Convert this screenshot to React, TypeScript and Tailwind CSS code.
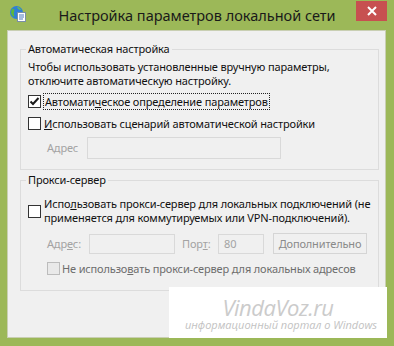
import React from "react";

function Box({ checked, disabled }: { checked?: boolean; disabled?: boolean }) {
  return (
    <span
      className={
        disabled
          ? "w-[13px] h-[13px] border border-[#bcbcbc] bg-[#e9e9e9] flex items-center justify-center shrink-0"
          : "w-[13px] h-[13px] border border-[#333333] bg-white flex items-center justify-center shrink-0"
      }
    >
      {checked && (
        <svg width="11" height="11" viewBox="0 0 11 11">
          <path d="M1.5 5.5 L4 8 L9.5 2" stroke="#1a1a1a" strokeWidth="2" fill="none" />
        </svg>
      )}
    </span>
  );
}

function GlobeIcon() {
  return (
    <svg width="18" height="18" viewBox="0 0 18 18">
      <circle cx="7.5" cy="7.5" r="6.5" fill="#2f7fd6" />
      <path d="M3 4 C5 3 6 5 5 7 C4 9 6 10 5 12 C3 11 2 9 2 7 Z" fill="#5cb83a" />
      <path d="M8 2 C10 2 12 4 12 5 C10 5 9 4 8 2 Z" fill="#6cc24a" />
      <rect x="8.5" y="7.5" width="8" height="9" fill="#ffffff" stroke="#7a8fa8" strokeWidth="1" />
      <path d="M10 10 H15 M10 12 H15 M10 14 H14" stroke="#4a7bc0" strokeWidth="1" />
    </svg>
  );
}

export default function App() {
  return (
    <div className="w-[394px] h-[346px] bg-[#9cb858] relative flex flex-col font-['Noto_Sans','Open_Sans',sans-serif] text-[11px] tracking-[-0.15px] leading-[14px] text-[#111111]">
      <div className="h-[30px] grid grid-cols-[1fr_auto_1fr] items-start">
        <div className="pl-[9px] pt-[5px]">
          <GlobeIcon />
        </div>
        <div className="pt-[6px] text-[14.5px] tracking-normal leading-[19px] text-[#1a1a1a]">Настройка параметров локальной сети</div>
        <div className="flex justify-end pr-[7px] pt-[1px]">
          <div className="w-[31px] h-[20px] bg-[#c75050] flex items-center justify-center">
            <svg width="10" height="10" viewBox="0 0 10 10">
              <path d="M1 1 L9 9 M9 1 L1 9" stroke="#ffffff" strokeWidth="2" />
            </svg>
          </div>
        </div>
      </div>

      <div className="ml-[7px] w-[379px] h-[308px] bg-[#f0f0f0] border border-[#c9cfb3] flex flex-col">
        <fieldset className="mt-[11px] ml-[12px] w-[359px] border border-[#dcdcdc] pl-[7px] pr-[7px] pt-[4px] pb-[10px]">
          <legend className="-ml-[2px] px-[2px]">Автоматическая настройка</legend>
          <p>
            Чтобы использовать установленные вручную параметры,
            <br />
            отключите автоматическую настройку.
          </p>
          <div className="mt-[4px] h-[18px] flex items-center gap-[2px]">
            <Box checked />
            <span className="border border-dotted border-[#222222] px-[1px] leading-[15px]">
              Автомати<span className="underline">ч</span>еское определение параметров
            </span>
          </div>
          <div className="mt-[4px] h-[18px] flex items-center gap-[3px]">
            <Box />
            <span className="leading-[15px]">
              <span className="underline">И</span>спользовать сценарий автоматической настройки
            </span>
          </div>
          <div className="mt-[5px] flex items-center pl-[19px]">
            <span className="w-[40px] text-[#a3a3a3]">Адрес</span>
            <div className="w-[194px] h-[22px] border border-[#d9d9d9] bg-[#f0f0f0]" />
          </div>
        </fieldset>

        <fieldset className="mt-[3px] ml-[12px] w-[359px] border border-[#dcdcdc] pl-[7px] pr-[7px] pt-[10px] pb-[14px]">
          <legend className="-ml-[2px] px-[2px]">Прокси-сервер</legend>
          <div className="flex items-center gap-[3px]">
            <Box />
            <span className="leading-[14px] whitespace-nowrap">
              Испо<span className="underline">л</span>ьзовать прокси-сервер для локальных подключений (не
              <br />
              применяется для коммутируемых или VPN-подключений).
            </span>
          </div>
          <div className="mt-[8px] flex items-center pl-[19px] text-[#a3a3a3]">
            <span className="w-[42px]">
              Адр<span className="underline">е</span>с:
            </span>
            <div className="w-[86px] h-[20px] border border-[#d9d9d9] bg-[#f0f0f0]" />
            <span className="ml-[7px] w-[36px]">
              Пор<span className="underline">т</span>:
            </span>
            <div className="w-[46px] h-[20px] border border-[#d9d9d9] bg-[#f0f0f0] pl-[5px] flex items-center">80</div>
            <div className="ml-[9px] w-[94px] h-[21px] border border-[#d5d5d5] bg-[#f0f0f0] flex items-center justify-center text-[#8a8a8a]">
              <span>
                <span className="underline">Д</span>ополнительно
              </span>
            </div>
          </div>
          <div className="mt-[7px] flex items-center gap-[2px] pl-[19px]">
            <Box disabled />
            <span className="text-[#6d6d6d] leading-[15px] whitespace-nowrap">
              Не использо<span className="underline">в</span>ать прокси-сервер для локальных адресов
            </span>
          </div>
        </fieldset>
      </div>

      <div className="absolute left-[169px] top-[287px] w-[218px] h-[51px] bg-white flex flex-col items-center pt-[9px] font-['Open_Sans',sans-serif] tracking-normal">
        <span className="text-[22px] leading-[22px] tracking-[-0.5px] italic text-[#cbcbcb] whitespace-nowrap">VindaVoz.ru</span>
        <span className="text-[11px] leading-[14px] italic text-[#c2c2c2] whitespace-nowrap ml-[6px]">информационный портал о Windows</span>
      </div>
    </div>
  );
}
